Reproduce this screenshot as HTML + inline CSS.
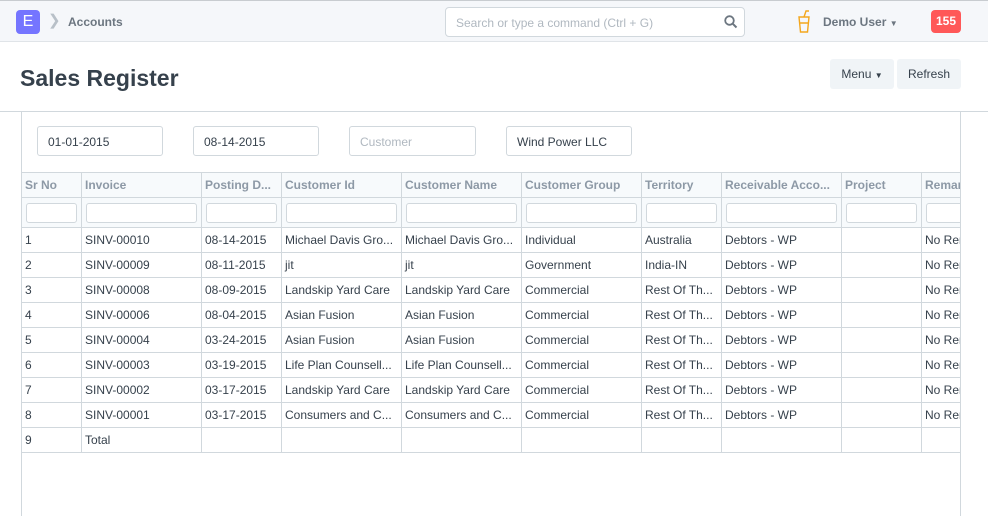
<!DOCTYPE html>
<html><head><style>
*{box-sizing:border-box;margin:0;padding:0}
body{width:988px;height:516px;overflow:hidden;background:#fff;font-family:"Liberation Sans",sans-serif;color:#36414c;position:relative}
.nav{position:absolute;left:0;top:0;width:988px;height:42px;background:#f5f7fa;border-top:1px solid #c8ccd0;border-bottom:1px solid #e0e4e8}
.logo{position:absolute;left:16px;top:9px;width:24px;height:24px;background:#7575ff;border-radius:4px;color:#fff;font-size:16px;text-align:center;line-height:24px}
.abs{position:absolute}
.search{position:absolute;left:445px;top:6px;width:300px;height:30px;border:1px solid #d1d8dd;border-radius:4px;background:#fff;font-size:12px;color:#b0b8c0;padding:8px 10px}
.badge{position:absolute;left:931px;top:9px;width:30px;height:23px;background:#ff5858;border-radius:4px;color:#fff;font-weight:bold;font-size:12px;text-align:center;line-height:23px}
.btn{position:absolute;top:59px;height:30px;background:#f0f4f7;border-radius:3px;font-size:12px;color:#36414c;line-height:30px;text-align:center}
.inp{position:absolute;top:126px;height:30px;border:1px solid #d1d8dd;border-radius:3px;font-size:12px;padding:8px 10px;background:#fff}
table{position:absolute;left:0;top:60px;border-collapse:collapse;table-layout:fixed;font-size:12px}
td,th{border:1px solid #d1d8dd;padding:0 3px;white-space:nowrap;overflow:hidden;text-align:left}
th{height:25px;background:#f7fafc;color:#8d99a6;font-weight:bold}
tr.f td{height:30px;background:#f7fafc;padding:0 4px}
tr.f div{height:20px;border:1px solid #d1d8dd;border-radius:3px;background:#fff}
tr.d td{height:25px;color:#36414c}
</style></head><body>
<div class="nav">
<div class="logo">E</div>
<div class="abs" style="left:48px;top:10px;color:#b8c0c8;font-size:15px">&#x276F;</div>
<div class="abs" style="left:68px;top:14px;font-size:12px;font-weight:bold;color:#6c7680">Accounts</div>
<div class="search">Search or type a command (Ctrl + G)
<svg style="position:absolute;right:6px;top:7px" width="14" height="14" viewBox="0 0 14 14"><circle cx="5.5" cy="5.5" r="4.3" fill="none" stroke="#6c7680" stroke-width="1.8"/><line x1="8.7" y1="8.7" x2="12.5" y2="12.5" stroke="#6c7680" stroke-width="2"/></svg></div>
<svg class="abs" style="left:797px;top:8px" width="14" height="24" viewBox="0 0 14 24"><path d="M2 8 L12 8 L10.5 23 L3.5 23 Z M3 14 L11 14" fill="none" stroke="#f4a71d" stroke-width="1.4"/><path d="M7 8 L9 2 L12 2" fill="none" stroke="#f4a71d" stroke-width="1.4"/></svg>
<div class="abs" style="left:823px;top:14px;font-size:12px;font-weight:bold;color:#6c7680">Demo User <span style="font-size:8px">&#9660;</span></div>
<div class="badge">155</div>
</div>
<div class="abs" style="left:20px;top:65px;font-size:23px;font-weight:bold;color:#36414c">Sales Register</div>
<div class="btn" style="left:830px;width:64px">Menu <span style="font-size:8px">&#9660;</span></div>
<div class="btn" style="left:897px;width:64px">Refresh</div>
<div class="abs" style="left:0;top:111px;width:988px;border-top:1px solid #d1d8dd"></div>
<div class="abs" style="left:21px;top:111px;height:405px;border-left:1px solid #d1d8dd"></div>
<div class="abs" style="left:960px;top:111px;height:405px;border-left:1px solid #d1d8dd"></div>
<div class="inp" style="left:37px;width:126px">01-01-2015</div>
<div class="inp" style="left:193px;width:126px">08-14-2015</div>
<div class="inp" style="left:349px;width:127px;color:#b0b8c0">Customer</div>
<div class="inp" style="left:506px;width:126px">Wind Power LLC</div>
<div class="abs" style="left:21px;top:112px;width:939px;height:404px;overflow:hidden">
<table style="width:960px">
<colgroup><col style="width:60px"><col style="width:120px"><col style="width:80px"><col style="width:120px"><col style="width:120px"><col style="width:120px"><col style="width:80px"><col style="width:120px"><col style="width:80px"><col style="width:60px"></colgroup>
<tr><th>Sr No</th><th>Invoice</th><th>Posting D...</th><th>Customer Id</th><th>Customer Name</th><th>Customer Group</th><th>Territory</th><th>Receivable Acco...</th><th>Project</th><th>Remarks</th></tr>
<tr class="f"><td><div></div></td><td><div></div></td><td><div></div></td><td><div></div></td><td><div></div></td><td><div></div></td><td><div></div></td><td><div></div></td><td><div></div></td><td><div></div></td></tr>
<tr class="d"><td>1</td><td>SINV-00010</td><td>08-14-2015</td><td>Michael Davis Gro...</td><td>Michael Davis Gro...</td><td>Individual</td><td>Australia</td><td>Debtors - WP</td><td></td><td>No Remarks</td></tr>
<tr class="d"><td>2</td><td>SINV-00009</td><td>08-11-2015</td><td>jit</td><td>jit</td><td>Government</td><td>India-IN</td><td>Debtors - WP</td><td></td><td>No Remarks</td></tr>
<tr class="d"><td>3</td><td>SINV-00008</td><td>08-09-2015</td><td>Landskip Yard Care</td><td>Landskip Yard Care</td><td>Commercial</td><td>Rest Of Th...</td><td>Debtors - WP</td><td></td><td>No Remarks</td></tr>
<tr class="d"><td>4</td><td>SINV-00006</td><td>08-04-2015</td><td>Asian Fusion</td><td>Asian Fusion</td><td>Commercial</td><td>Rest Of Th...</td><td>Debtors - WP</td><td></td><td>No Remarks</td></tr>
<tr class="d"><td>5</td><td>SINV-00004</td><td>03-24-2015</td><td>Asian Fusion</td><td>Asian Fusion</td><td>Commercial</td><td>Rest Of Th...</td><td>Debtors - WP</td><td></td><td>No Remarks</td></tr>
<tr class="d"><td>6</td><td>SINV-00003</td><td>03-19-2015</td><td>Life Plan Counsell...</td><td>Life Plan Counsell...</td><td>Commercial</td><td>Rest Of Th...</td><td>Debtors - WP</td><td></td><td>No Remarks</td></tr>
<tr class="d"><td>7</td><td>SINV-00002</td><td>03-17-2015</td><td>Landskip Yard Care</td><td>Landskip Yard Care</td><td>Commercial</td><td>Rest Of Th...</td><td>Debtors - WP</td><td></td><td>No Remarks</td></tr>
<tr class="d"><td>8</td><td>SINV-00001</td><td>03-17-2015</td><td>Consumers and C...</td><td>Consumers and C...</td><td>Commercial</td><td>Rest Of Th...</td><td>Debtors - WP</td><td></td><td>No Remarks</td></tr>
<tr class="d"><td>9</td><td>Total</td><td></td><td></td><td></td><td></td><td></td><td></td><td></td><td></td></tr>
</table>
</div>
</body></html>
